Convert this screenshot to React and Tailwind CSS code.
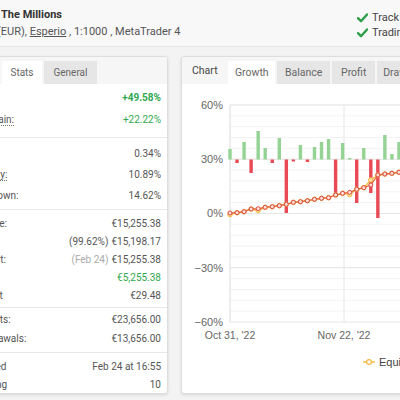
import React from "react";

const GREEN = "#2fa84f";

function Check() {
  return (
    <svg width="11" height="10" viewBox="0 0 11 10" className="shrink-0">
      <path d="M1 5.2 L4 8.2 L10 1.5" fill="none" stroke="#2e9e48" strokeWidth="2.4" strokeLinecap="round" strokeLinejoin="round" />
    </svg>
  );
}

function Row({ label, children, h }) {
  return (
    <div className={`flex items-center justify-between pl-[13px] pr-[6px] text-[10px] text-[#555] whitespace-nowrap ${h}`}>
      <span>{label}</span>
      <span className="flex items-center gap-[3px]">{children}</span>
    </div>
  );
}

const DL = ({ children }) => (
  <span className="border-b border-dotted border-[#777] leading-[11px]">{children}</span>
);

function LeftCard() {
  return (
    <div className="-ml-[45px] w-[213px] h-[338px] shrink-0 bg-white border border-[#dedede] rounded-[3px] shadow-[0_1px_3px_rgba(0,0,0,0.12)] flex flex-col">
      <div className="h-[27px] bg-[#f6f6f6] flex items-end gap-[2px] pl-[2px]">
        <div className="h-[23px] w-[42px] bg-[#e6e6e6] flex items-center justify-center text-[10px] text-[#666]">Info</div>
        <div className="h-[23px] w-[40px] bg-white flex items-center justify-center text-[10px] text-[#666]">Stats</div>
        <div className="h-[23px] w-[53px] bg-[#e6e6e6] flex items-center justify-center text-[10px] text-[#666]">General</div>
      </div>
      <div className="pt-[2px] pb-[7px] border-b border-[#e8e8e8]">
        <Row label="Gain:" h="h-[22px]"><span className="font-bold" style={{ color: GREEN }}>+49.58%</span></Row>
        <Row label={<DL>Abs. Gain:</DL>} h="h-[22px]"><span style={{ color: GREEN }}>+22.22%</span></Row>
      </div>
      <div className="pt-[5px] pb-[3px] border-b border-[#e8e8e8]">
        <Row label="Daily:" h="h-[21px]">0.34%</Row>
        <Row label={<DL>Monthly:</DL>} h="h-[21px]">10.89%</Row>
        <Row label="Drawdown:" h="h-[21px]">14.62%</Row>
      </div>
      <div className="pt-[4px] pb-[3px] border-b border-[#e8e8e8]">
        <Row label="Balance:" h="h-[18px]">€15,255.38</Row>
        <Row label="Equity:" h="h-[18px]"><span>(99.62%)</span><span>€15,198.17</span></Row>
        <Row label="Highest:" h="h-[18px]"><span className="text-[#aaa]">(Feb 24)</span><span>€15,255.38</span></Row>
        <Row label="Profit:" h="h-[18px]"><span style={{ color: GREEN }}>€5,255.38</span></Row>
        <Row label="Interest" h="h-[18px]">€29.48</Row>
      </div>
      <div className="pt-[2px] pb-[4px] border-b border-[#e8e8e8]">
        <Row label="Deposits:" h="h-[19px]">€23,656.00</Row>
        <Row label="Withdrawals:" h="h-[19px]">€13,656.00</Row>
      </div>
      <div className="pt-[4px]">
        <Row label="Updated" h="h-[18px]">Feb 24 at 16:55</Row>
        <Row label="Tracking" h="h-[18px]">10</Row>
      </div>
    </div>
  );
}

const bars = [
  149, 163, 142, 173, 131, 148, 163, 138, 213, 161.5, 145, 162, 147, 142, 139, 194, 143, 158, 203, 148, 193, 218, 135, 154, 142,
];
const growth = [
  213, 212.7, 211.7, 209, 208.7, 207.3, 206.7, 205.7, 204.3, 202.3, 201.7, 200.7, 199.3, 198.3, 197.7, 195, 193.3, 192.3, 189.3, 187.7, 185, 175, 174, 173.3, 172.3,
];
const equity = growth.map((v, i) => (i === 0 ? 214.5 : i === 4 ? 210.5 : i === 17 ? 194.5 : i === 20 ? 180 : v));

function Chart() {
  const OX = 181;
  const OY = 84;
  const px = (i) => 229 + i * 7.04 - OX;
  const py = (y) => y - OY;
  const major = [105, 159.25, 213.5, 267.75, 322];
  const minor = [];
  for (let k = 0; k < 20; k++) minor.push(105 + k * 10.85);
  const labels = ["60%", "30%", "0%", "−30%", "−60%"];
  const base = 159.5;
  const gPts = growth.map((y, i) => `${px(i)},${py(y)}`).join(" ");
  const ePts = equity.map((y, i) => `${px(i)},${py(y)}`).join(" ");
  return (
    <svg width="260" height="310" className="block">
      {minor.map((y, k) => (
        <line key={"m" + k} x1={48} x2={260} y1={py(y)} y2={py(y)} stroke="#f3f3f3" strokeWidth="1" />
      ))}
      {major.map((y, k) => (
        <line key={"M" + k} x1={48} x2={260} y1={py(y)} y2={py(y)} stroke="#e6e6e6" strokeWidth="1" />
      ))}
      <line x1={48} x2={48} y1={py(105)} y2={py(322)} stroke="#dcdcdc" />
      <line x1={162} x2={162} y1={py(105)} y2={py(322)} stroke="#e6e6e6" />
      {labels.map((t, k) => (
        <text key={t} x={41} y={py(major[k]) + 3.8} textAnchor="end" fontSize="11" fill="#666" fontFamily="'Liberation Sans', Arial, sans-serif">
          {t}
        </text>
      ))}
      <text x={48} y={py(339)} textAnchor="middle" fontSize="10.5" fill="#666" fontFamily="'Liberation Sans', Arial, sans-serif">Oct 31, '22</text>
      <text x={162} y={py(339)} textAnchor="middle" fontSize="10.5" fill="#666" fontFamily="'Liberation Sans', Arial, sans-serif">Nov 22, '22</text>
      {bars.map((y, i) => {
        const up = y < base;
        const top = up ? y : base;
        const h = Math.abs(y - base);
        return <rect key={"b" + i} x={px(i) - 1.7} y={py(top)} width="3.4" height={Math.max(h, 1)} fill={up ? "#94d394" : "#e84b55"} />;
      })}
      <polyline points={ePts} fill="none" stroke="#f5b944" strokeWidth="1.3" />
      {equity.map((y, i) => (
        <circle key={"e" + i} cx={px(i)} cy={py(y)} r="2.3" fill="#fbe0a0" stroke="#f5b944" strokeWidth="1" />
      ))}
      <polyline points={gPts} fill="none" stroke="#e8633a" strokeWidth="1.3" />
      {growth.map((y, i) => (
        <circle key={"g" + i} cx={px(i)} cy={py(y)} r="2" fill="#fbe3da" stroke="#d9473e" strokeWidth="1" />
      ))}
      <line x1={181} x2={193} y1={py(362)} y2={py(362)} stroke="#f5b944" strokeWidth="1.3" />
      <circle cx={187} cy={py(362)} r="2.4" fill="#fff" stroke="#f5b944" strokeWidth="1.2" />
      <text x={197} y={py(365.5)} fontSize="11" fill="#444" fontFamily="'Liberation Sans', Arial, sans-serif">Equity</text>
    </svg>
  );
}

function RightCard() {
  return (
    <div className="ml-[13px] w-[260px] h-[338px] shrink-0 bg-white border border-[#dedede] rounded-[3px] shadow-[0_1px_3px_rgba(0,0,0,0.12)] flex flex-col overflow-hidden">
      <div className="h-[27px] bg-[#f6f6f6] flex items-end gap-[2px] shrink-0">
        <div className="w-[45px] h-[27px] pl-[10px] flex items-center text-[10.5px] text-[#444]">Chart</div>
        <div className="h-[23px] w-[48px] bg-white flex items-center justify-center text-[10.5px] text-[#666]">Growth</div>
        <div className="h-[23px] w-[54px] bg-[#e6e6e6] flex items-center justify-center text-[10.5px] text-[#666]">Balance</div>
        <div className="h-[23px] w-[44px] bg-[#e6e6e6] flex items-center justify-center text-[10.5px] text-[#666]">Profit</div>
        <div className="h-[23px] w-[64px] bg-[#e6e6e6] flex items-center justify-start pl-[6px] text-[10.5px] text-[#666]">Drawdown</div>
      </div>
      <Chart />
    </div>
  );
}

export default function App() {
  return (
    <div className="w-[400px] h-[400px] overflow-hidden bg-[#f3f3f3] font-['Roboto',sans-serif] relative">
      <div className="h-[47px] bg-[#f8f8f8] border-b border-[#e4e4e4] flex justify-between">
        <div className="pt-[8px] pl-[1px] whitespace-nowrap">
          <div className="text-[11px] font-bold text-[#333] leading-[14px]">The Millions</div>
          <div className="text-[11px] text-[#555] leading-[14px] mt-[3px] -ml-[4px]">
            (EUR), <span className="underline">Esperio</span> , 1:1000 , MetaTrader 4
          </div>
        </div>
        <div className="w-[43px] shrink-0 pt-[10px] whitespace-nowrap text-[11px] text-[#444] leading-[15px]">
          <div className="flex items-center gap-[4px]"><Check />Track Record</div>
          <div className="flex items-center gap-[4px]"><Check />Trading Privileges</div>
        </div>
      </div>
      <div className="flex items-start mt-[9px]">
        <LeftCard />
        <RightCard />
      </div>
    </div>
  );
}
